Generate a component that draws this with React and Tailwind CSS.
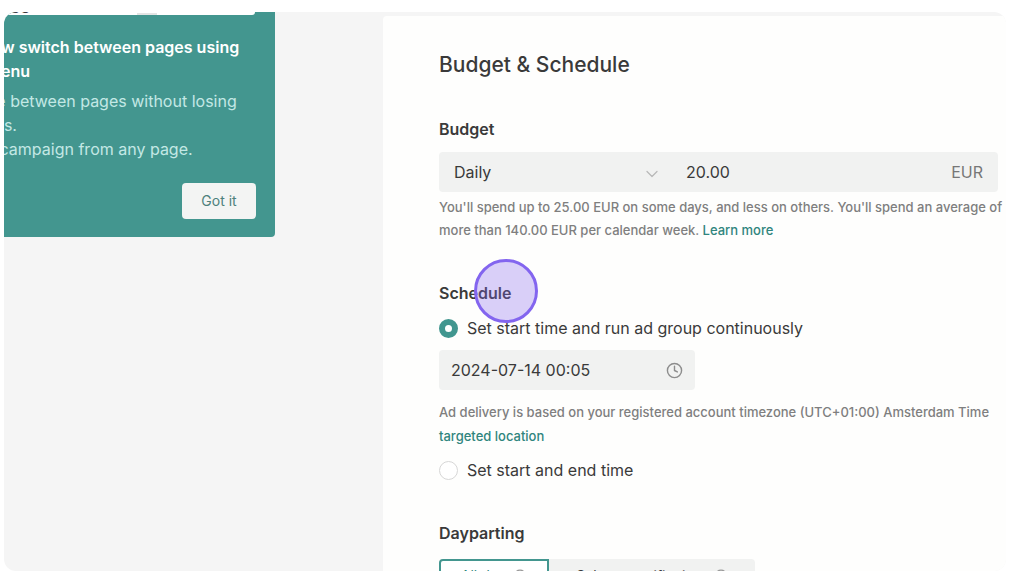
import { useState } from "react";
import { ChevronDown, Clock4, Info } from "lucide-react";

const radioClass =
  "m-0 size-[19px] shrink-0 appearance-none rounded-full border border-[#d6d6d6] bg-white checked:border-[6px] checked:border-[#41968f]";

const helperClass = "text-[13px] font-medium whitespace-nowrap text-[#7f7f7f]";

function PageTip() {
  return (
    <section className="absolute top-0 right-27 -left-[88px] z-10 flex h-[225px] flex-col rounded-b bg-[#43968f] pr-[19px] text-base leading-6 text-[#c3e8e5]">
      <div className="flex h-[3px] w-[339px] shrink-0 items-end overflow-hidden rounded-br bg-white pl-[94px] text-base leading-4 font-semibold text-[#3a3a3a]">
        65
        <span className="ml-auto mr-[98px] h-0.5 w-5 bg-[#e4e4e4]" />
      </div>
      <h2 className="pt-5 font-semibold whitespace-nowrap text-white">
        You can now switch between pages using
        <br />
        the main menu
      </h2>
      <p className="pt-1.5 whitespace-nowrap">
        Easily move between pages without losing
        <br />
        any changes.
        <br />
        Open your campaign from any page.
      </p>
      <button
        type="button"
        className="mt-[22px] h-9 w-[74px] self-end rounded bg-[#f3f4f3] text-sm text-[#4d817c]"
      >
        Got it
      </button>
    </section>
  );
}

function BudgetFields() {
  return (
    <fieldset className="min-w-0">
      <legend className="text-base leading-6 font-semibold">Budget</legend>
      <div className="mt-[11px] mr-2 flex h-10 items-center rounded bg-[#f1f2f1] text-base">
        <div className="relative w-[233px] shrink-0">
          <select
            aria-label="Budget type"
            className="h-10 w-full appearance-none bg-transparent pl-[15px]"
          >
            <option>Daily</option>
            <option>Lifetime</option>
          </select>
          <ChevronDown
            className="pointer-events-none absolute top-3 right-2.5 size-5 text-[#b9b9b9]"
            strokeWidth={1.5}
          />
        </div>
        <input
          aria-label="Budget amount"
          defaultValue="20.00"
          className="h-10 min-w-0 flex-1 bg-transparent pl-[14px]"
        />
        <span className="pr-[15px] text-[#777]">EUR</span>
      </div>
      <p className={`mt-1 leading-[23px] ${helperClass}`}>
        You'll spend up to 25.00 EUR on some days, and less on others. You'll spend an average of
        <br />
        more than 140.00 EUR per calendar week.{" "}
        <a href="#budget" className="text-[#30857d]">
          Learn more
        </a>
      </p>
    </fieldset>
  );
}

function ScheduleFields() {
  const [mode, setMode] = useState("continuous");
  return (
    <fieldset className="mt-[39px] min-w-0">
      <legend className="relative text-base leading-6 font-semibold">
        Schedule
        <span className="pointer-events-none absolute -top-[22px] left-[35px] size-16 rounded-full border-[3px] border-[#8365ef] bg-[#8662f0]/30" />
      </legend>
      <label className="mt-[11px] flex h-6 items-center gap-[9px] text-base">
        <input
          type="radio"
          name="schedule"
          className={radioClass}
          checked={mode === "continuous"}
          onChange={() => setMode("continuous")}
        />
        Set start time and run ad group continuously
      </label>
      <div className="mt-[10px] flex h-10 w-64 items-center rounded bg-[#f1f2f1] px-3 text-base">
        <input
          aria-label="Start time"
          defaultValue="2024-07-14 00:05"
          className="h-10 min-w-0 flex-1 bg-transparent"
        />
        <Clock4 className="size-[17px] text-[#8d8d8d]" strokeWidth={2} aria-hidden="true" />
      </div>
      <p className={`mt-[10px] leading-6 ${helperClass}`}>
        Ad delivery is based on your registered account timezone (UTC+01:00) Amsterdam Time
        <br />
        <a href="#location" className="text-[#30857d]">
          targeted location
        </a>
      </p>
      <label className="mt-[10px] flex h-6 items-center gap-[9px] text-base">
        <input
          type="radio"
          name="schedule"
          className={radioClass}
          checked={mode === "range"}
          onChange={() => setMode("range")}
        />
        Set start and end time
      </label>
    </fieldset>
  );
}

function Dayparting() {
  return (
    <section className="mt-[39px]">
      <h2 className="text-base leading-6 font-semibold">Dayparting</h2>
      <div className="mt-[14px] flex h-[34px] w-[316px] rounded-t bg-[#f1f2f1] text-sm whitespace-nowrap">
        <button
          type="button"
          className="flex w-[110px] items-center justify-center gap-2 rounded-tl border-2 border-[#43968f] bg-white text-[#30857d]"
        >
          All day <Info className="size-3.5 text-[#999]" />
        </button>
        <button type="button" className="flex flex-1 items-center justify-center gap-2">
          Select specific time <Info className="size-3.5 text-[#999]" />
        </button>
      </div>
    </section>
  );
}

export default function App() {
  return (
    <div className="h-screen bg-white pt-3 pr-[18px] pb-[9px] pl-1 font-['Inter','Liberation_Sans',sans-serif] text-[#3a3a3a]">
      <div className="flex h-full overflow-hidden rounded-xl bg-[#f5f5f5]">
        <aside className="relative w-[379px] shrink-0">
          <PageTip />
        </aside>
        <main className="mt-1 min-w-0 flex-1 rounded-tl bg-[#fefefd] pl-14">
          <h1 className="pt-[33px] text-[21px] leading-8 font-medium">Budget &amp; Schedule</h1>
          <div className="pt-9">
            <BudgetFields />
            <ScheduleFields />
            <Dayparting />
          </div>
        </main>
      </div>
    </div>
  );
}
